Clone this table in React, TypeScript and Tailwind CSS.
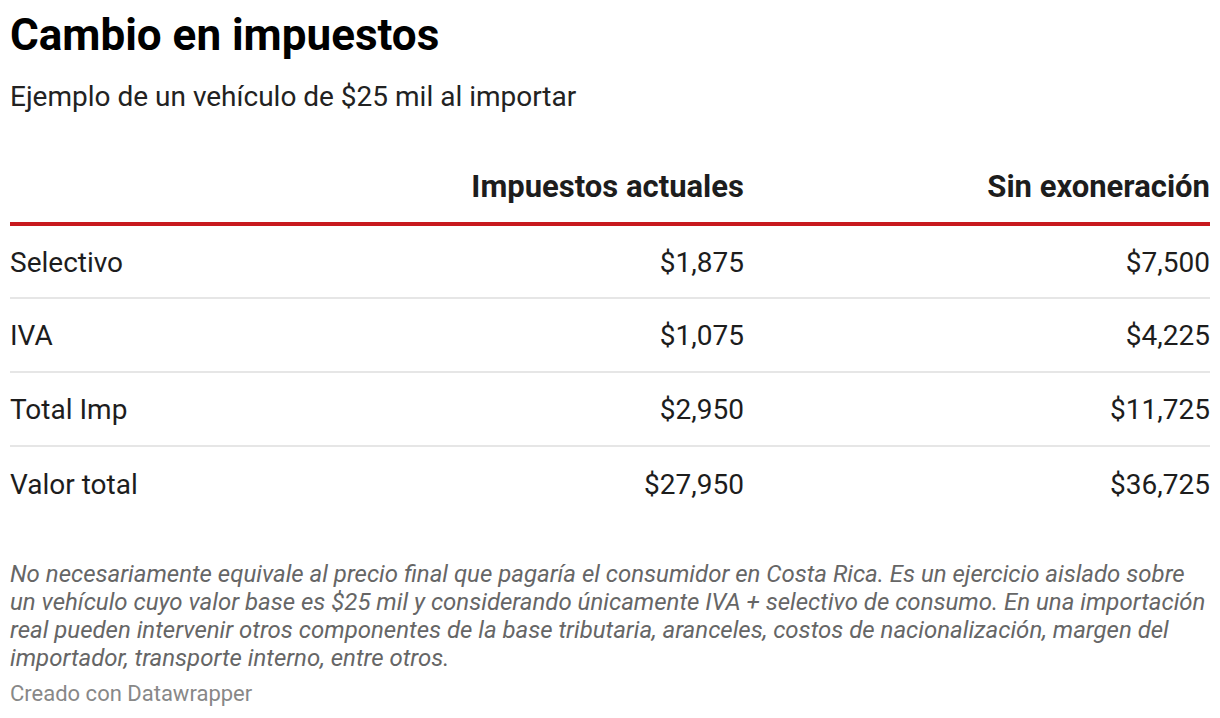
const rows = [
  { label: 'Selectivo', current: '$1,875', without: '$7,500' },
  { label: 'IVA', current: '$1,075', without: '$4,225' },
  { label: 'Total Imp', current: '$2,950', without: '$11,725' },
  { label: 'Valor total', current: '$27,950', without: '$36,725' },
]

export default function App() {
  return (
    <div className="min-h-[718px] w-[1220px] bg-white px-[10px] pt-[11px] font-['Roboto',sans-serif] text-[#1d1d1d]">
      <h1 className="text-[44px] font-bold leading-[48px] text-black">Cambio en impuestos</h1>
      <p className="mt-[21px] text-[28px] leading-[34px] text-[#222]">
        Ejemplo de un vehículo de $25 mil al importar
      </p>

      <table className="mt-[55px] w-full table-fixed border-collapse">
        <thead>
          <tr className="border-b-[4px] border-[#c8191e]">
            <th className="w-[434px]" />
            <th className="w-[300px] pb-[17px] text-right text-[31px] font-bold leading-[36px] text-[#1d1d1d]">
              Impuestos actuales
            </th>
            <th className="w-[466px] pb-[17px] text-right text-[31px] font-bold leading-[36px] text-[#1d1d1d]">
              Sin exoneración
            </th>
          </tr>
        </thead>
        <tbody>
          {rows.map((row, i) => (
            <tr
              key={row.label}
              className={i < rows.length - 1 ? 'h-[74px] border-b-2 border-[#e6e6e6]' : 'h-[74px]'}
            >
              <td className="pt-[2px] text-left text-[28px] leading-[34px]">{row.label}</td>
              <td className="pt-[2px] text-right text-[28px] leading-[34px]">{row.current}</td>
              <td className="pt-[2px] text-right text-[28px] leading-[34px]">{row.without}</td>
            </tr>
          ))}
        </tbody>
      </table>

      <p className="mt-[40px] text-[24px] italic leading-[28px] text-[#666]">
        No necesariamente equivale al precio final que pagaría el consumidor en Costa Rica. Es un ejercicio
        aislado sobre un vehículo cuyo valor base es $25 mil y considerando únicamente IVA + selectivo de
        consumo. En una importación real pueden intervenir otros componentes de la base tributaria,
        aranceles, costos de nacionalización, margen del importador, transporte interno, entre otros.
      </p>
      <p className="mt-[8px] text-[22px] leading-[28px] text-[#888]">Creado con Datawrapper</p>
    </div>
  )
}
